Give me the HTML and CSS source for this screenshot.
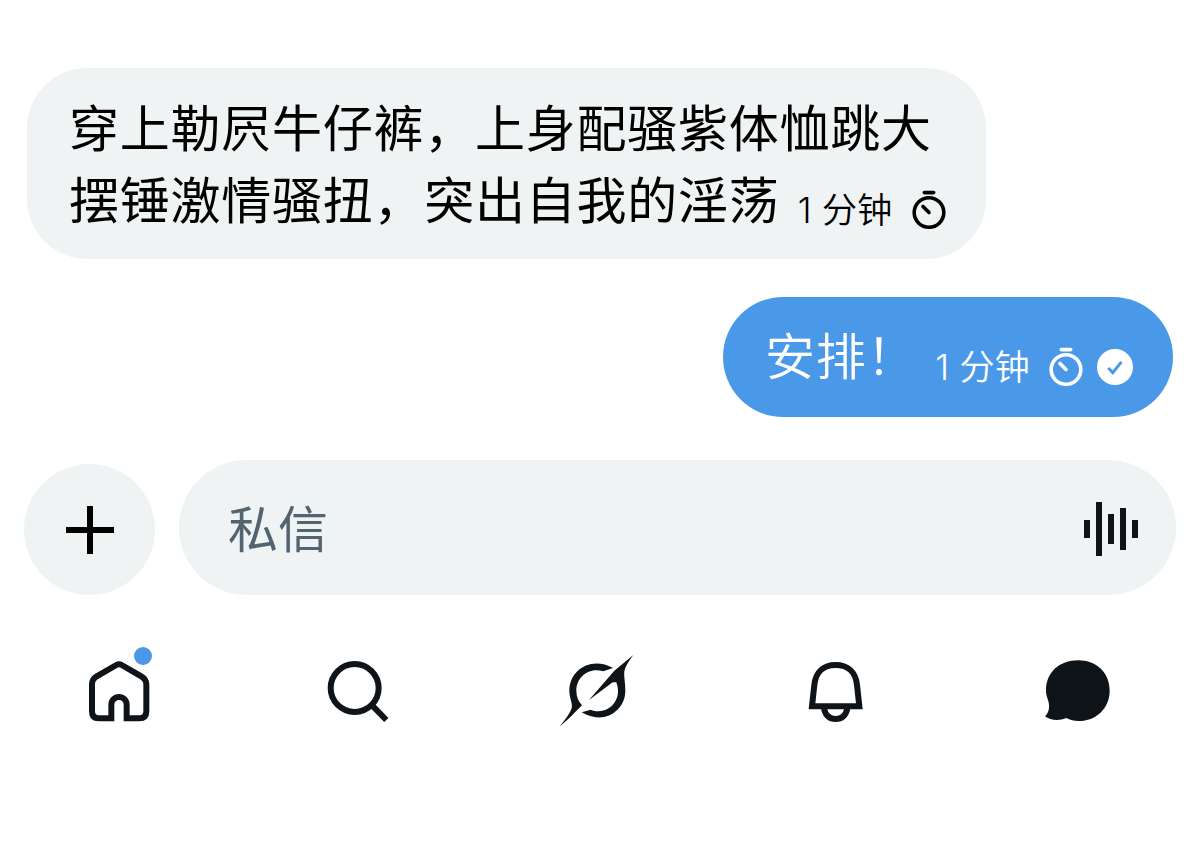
FILE: index.html
```html
<!DOCTYPE html>
<html lang="zh-CN">
<head>
    <meta charset="UTF-8">
    <meta name="viewport" content="width=device-width, initial-scale=1.0">
    <title>私信</title>
    <link rel="stylesheet" href="styles.css">
</head>
<body>
    <main>
        <article class="message received">
            <p>穿上勒屄牛仔裤，上身配骚紫体恤跳大<br>摆锤激情骚扭，突出自我的淫荡</p>
            <div class="meta">
                <span>1 分钟</span>
                <svg class="timer" viewBox="0 0 36 42">
                    <circle cx="18" cy="24.5" r="14.8"/>
                    <path d="M13.3 4.6h9.4M12 18.5l6 6"/>
                </svg>
            </div>
        </article>
        <article class="message sent">
            <p>安排！</p>
            <div class="meta">
                <span>1 分钟</span>
                <svg class="timer" viewBox="0 0 36 42">
                    <circle cx="18" cy="24.5" r="14.8"/>
                    <path d="M13.3 4.6h9.4M12 18.5l6 6"/>
                </svg>
                <svg class="check" viewBox="0 0 36 36">
                    <circle cx="18" cy="18" r="18"/>
                    <path d="M11.3 19l4.5 4.7 8.6-10.8"/>
                </svg>
            </div>
        </article>
    </main>

    <form class="composer">
        <button type="button" class="add" aria-label="添加">
            <svg viewBox="0 0 50 50"><path d="M25 1v48M1 25h48"/></svg>
        </button>
        <div class="field">
            <span>私信</span>
            <svg viewBox="0 0 54 54">
                <path d="M3 18v18M15 0v54M27 12v30M39 6v42M51 18v18"/>
            </svg>
        </div>
    </form>

    <nav>
        <svg class="line" viewBox="-3 15 300 300">
            <path d="M80 124l59-34q8-5 16 0l59 34q15 9 15 24v81q0 21-21 21h-38v-41a23 23 0 0 0-46 0v41h-38q-20 0-20-21v-81q0-15 14-24z"/>
            <circle class="dot" cx="219" cy="63" r="27"/>
        </svg>
        <svg class="line" viewBox="-3 0 300 300">
            <circle cx="134" cy="144" r="72"/>
            <path d="M184 194l45 46"/>
        </svg>
        <svg viewBox="12 0 300 300">
            <path d="M132 180L208 92L265 45Q241 76 238 94C236 110 241 125 241 152C241 212 176 257 110 217L137 209C178 225 219 196 219 153Q219 141 214 127L203 127Z"/>
            <path d="M204 84L175 94C133 80 94 110 94 152Q94 177 111 196L90 217Q72 237 43 260Q73 226 80 205C84 190 73 174 73 152C73 90 139 47 204 84Z"/>
        </svg>
        <svg class="line" viewBox="12 0 300 300">
            <path d="M81 199l7-64c4-41 29-60 64-60s60 19 64 60l7 64z"/>
            <path d="M117 206c5 22 19 31 35 31s30-9 35-31"/>
        </svg>
        <svg viewBox="-3 0 300 300">
            <path d="M144 61c57 0 95 38 95 91 0 54-42 91-92 91-15 0-27-3-38-9-21 9-48 8-64-5 13-12 15-31 9-49-4-11-6-19-6-29 0-53 40-90 96-90z"/>
        </svg>
    </nav>
</body>
</html>
```
FILE: styles.css
```css
* {
    box-sizing: border-box;
}

body {
    margin: 0;
    padding: 68px 24px 0;
    height: 867px;
    background-color: #fff;
    color: #000;
    font-family: Inter, "Noto Sans CJK SC", sans-serif;
}

svg {
    display: block;
    flex: none;
}

p {
    margin: 0;
}

main {
    display: flex;
    flex-direction: column;
    gap: 38px;
    padding: 0 3px;
}

.message {
    display: flex;
    align-items: flex-end;
    border-radius: 60px;
    font-size: 50px;
    line-height: 72px;
    letter-spacing: 0.75px;
    white-space: nowrap;
}

.received {
    width: 959px;
    height: 191px;
    padding: 0 0 22px 42px;
    background-color: #eff3f4;
}

.sent {
    align-self: flex-end;
    width: 450px;
    height: 120px;
    padding: 0 0 24px 42px;
    background-color: #4a99e9;
    color: #fff;
}

.sent p {
    font-weight: 350;
}

.meta {
    display: flex;
    align-items: center;
    height: 42px;
    font-size: 35px;
    font-weight: 350;
    line-height: 42px;
    letter-spacing: 0.3px;
}

.meta span {
    position: relative;
    top: 1px;
}

.received .meta {
    margin-left: -134px;
    margin-bottom: 7px;
}

.sent .meta {
    margin-left: 18px;
    margin-bottom: 6px;
}

.timer {
    width: 36px;
    height: 42px;
    margin-left: 18px;
    fill: none;
    stroke: currentColor;
    stroke-width: 3.6;
    stroke-linecap: round;
}

.check {
    width: 36px;
    height: 36px;
    margin-top: 2px;
    margin-left: 13px;
    fill: #fff;
}

.check path {
    fill: none;
    stroke: #4a99e9;
    stroke-width: 3;
}

.composer {
    display: flex;
    align-items: flex-end;
    gap: 24px;
    height: 135px;
    margin-top: 43px;
}

.add {
    display: flex;
    align-items: center;
    justify-content: center;
    width: 131px;
    height: 131px;
    padding: 0;
    border: none;
    border-radius: 50%;
    background-color: #eff3f4;
}

.add svg {
    width: 50px;
    height: 50px;
    stroke: #000;
    stroke-width: 6;
}

.field {
    display: flex;
    align-items: center;
    justify-content: space-between;
    width: 997px;
    height: 135px;
    padding: 0 38px 0 49px;
    border-radius: 68px;
    background-color: #eff3f4;
    color: #536471;
    font-size: 50px;
}

.field span {
    padding-bottom: 4px;
}

.field svg {
    width: 54px;
    height: 54px;
    margin-top: 3px;
    stroke: #0f1419;
    stroke-width: 6;
}

nav {
    display: flex;
    gap: 140px;
    margin: 45px 0 0 45px;
}

nav svg {
    width: 100px;
    height: 100px;
    overflow: visible;
    fill: #0f1419;
}

nav .line {
    fill: none;
    stroke: #0f1419;
    stroke-width: 18;
}

nav .dot {
    fill: #4a99e9;
    stroke: none;
}
```
